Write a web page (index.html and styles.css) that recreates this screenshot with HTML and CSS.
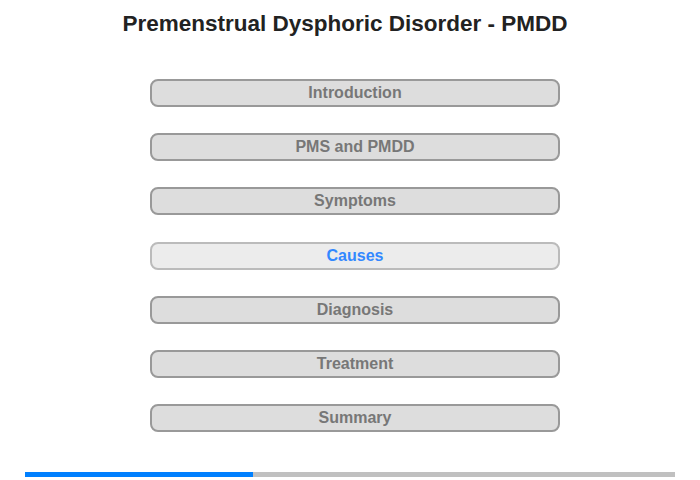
FILE: index.html
```html
<!DOCTYPE html>
<html lang="en">
<head>
    <meta charset="UTF-8">
    <title>Premenstrual Dysphoric Disorder - PMDD</title>
    <link rel="stylesheet" href="styles.css">
</head>
<body>
    <h1 class="title">Premenstrual Dysphoric Disorder - PMDD</h1>
    <nav class="menu">
        <div class="menu-btn">Introduction</div>
        <div class="menu-btn">PMS and PMDD</div>
        <div class="menu-btn">Symptoms</div>
        <div class="menu-btn active">Causes</div>
        <div class="menu-btn">Diagnosis</div>
        <div class="menu-btn">Treatment</div>
        <div class="menu-btn">Summary</div>
    </nav>
    <div class="progress">
        <div class="progress-fill" style="width: 35%"></div>
    </div>
</body>
</html>
```

FILE: styles.css
```css
body {
    margin: 0;
    width: 700px;
    height: 480px;
    font-family: 'Liberation Sans', Arial, sans-serif;
    background: #fff;
    display: flex;
    flex-direction: column;
    position: relative;
}
.title {
    margin: 11px 0 0 0;
    font-size: 22.5px;
    line-height: 25px;
    font-weight: bold;
    color: #222;
    text-align: center;
    padding-right: 10px;
}
.menu {
    display: flex;
    flex-direction: column;
    gap: 26.2px;
    margin: 43px 0 0 150px;
    width: 410px;
}
.menu-btn {
    height: 24px;
    line-height: 24px;
    border: 2px solid #999;
    border-radius: 8px;
    background: #ddd;
    color: #777;
    font-size: 16px;
    font-weight: bold;
    text-align: center;
}
.menu-btn.active {
    background: #ececec;
    border-color: #bbb;
    color: #3388ff;
}
.progress {
    position: absolute;
    left: 25px;
    top: 472px;
    width: 650px;
    height: 5px;
    background: #c0c0c0;
}
.progress-fill {
    height: 100%;
    background: #0080ff;
}
```
